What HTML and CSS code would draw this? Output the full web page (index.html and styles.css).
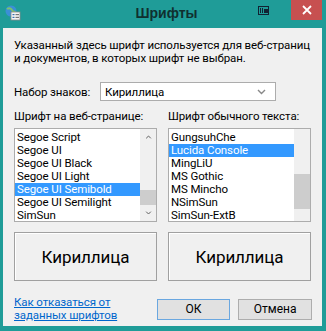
FILE: index.html
```html
<!DOCTYPE html>
<html lang="ru">
<head>
  <meta charset="UTF-8">
  <title>Шрифты</title>
  <link rel="stylesheet" href="styles.css">
</head>
<body>
  <div class="window">
    <!-- заголовок окна -->
    <div class="titlebar">
      <svg class="app-icon" width="16" height="16" viewBox="0 0 16 16">
        <circle cx="6" cy="6" r="5.5" fill="#3b8fd6"/>
        <path d="M2 4 Q5 2 7 5 T10 6" stroke="#7cc36a" stroke-width="2" fill="none"/>
        <rect x="6" y="7" width="9" height="8" fill="#f4f4f4" stroke="#8a8a8a" stroke-width="0.8"/>
        <rect x="7.5" y="9" width="2" height="1.2" fill="#3a6fb0"/>
        <rect x="10.5" y="9" width="3.5" height="1.2" fill="#777"/>
        <rect x="7.5" y="11.8" width="2" height="1.2" fill="#3a6fb0"/>
        <rect x="10.5" y="11.8" width="3.5" height="1.2" fill="#777"/>
      </svg>
      <div class="title">Шрифты</div>
      <svg class="pin-icon" width="11" height="9" viewBox="0 0 11 9">
        <rect x="0.5" y="0.5" width="10" height="8" fill="none" stroke="#123" stroke-width="1"/>
        <rect x="2" y="2" width="1" height="5" fill="#123"/>
        <rect x="4" y="2" width="1" height="5" fill="#123"/>
        <rect x="6" y="3" width="4" height="4" fill="#123"/>
      </svg>
      <div class="close">
        <svg width="10" height="10" viewBox="0 0 10 10">
          <path d="M1 1 L9 9 M9 1 L1 9" stroke="#fff" stroke-width="1.8"/>
        </svg>
      </div>
    </div>

    <div class="client">
      <p class="intro">Указанный здесь шрифт используется для веб-страниц и документов, в которых шрифт не выбран.</p>

      <div class="charset">
        <span>Набор знаков:</span>
        <div class="select">
          <span>Кириллица</span>
          <svg width="9" height="6" viewBox="0 0 9 6"><path d="M1 1 L4.5 4.5 L8 1" stroke="#888" stroke-width="1.4" fill="none"/></svg>
        </div>
      </div>

      <div class="columns">
        <div class="column">
          <label>Шрифт на веб-странице:</label>
          <div class="listbox">
            <ul class="items">
              <li>Segoe Script</li>
              <li>Segoe UI</li>
              <li>Segoe UI Black</li>
              <li>Segoe UI Light</li>
              <li class="selected">Segoe UI Semibold</li>
              <li>Segoe UI Semilight</li>
              <li>SimSun</li>
            </ul>
            <div class="scrollbar">
              <svg class="arrow" width="9" height="6" viewBox="0 0 9 6"><path d="M1 5 L4.5 1.5 L8 5" stroke="#606060" stroke-width="1.5" fill="none"/></svg>
              <div class="track"><div class="thumb" style="margin-top:45px;height:15px"></div></div>
              <svg class="arrow" width="9" height="6" viewBox="0 0 9 6"><path d="M1 1 L4.5 4.5 L8 1" stroke="#606060" stroke-width="1.5" fill="none"/></svg>
            </div>
          </div>
          <div class="preview">Кириллица</div>
        </div>

        <div class="column">
          <label>Шрифт обычного текста:</label>
          <div class="listbox">
            <ul class="items">
              <li>GungsuhChe</li>
              <li class="selected">Lucida Console</li>
              <li>MingLiU</li>
              <li>MS Gothic</li>
              <li>MS Mincho</li>
              <li>NSimSun</li>
              <li>SimSun-ExtB</li>
            </ul>
            <div class="scrollbar">
              <svg class="arrow" width="9" height="6" viewBox="0 0 9 6"><path d="M1 5 L4.5 1.5 L8 5" stroke="#606060" stroke-width="1.5" fill="none"/></svg>
              <div class="track"><div class="thumb" style="margin-top:33px;height:35px"></div></div>
              <svg class="arrow" width="9" height="6" viewBox="0 0 9 6"><path d="M1 1 L4.5 4.5 L8 1" stroke="#606060" stroke-width="1.5" fill="none"/></svg>
            </div>
          </div>
          <div class="preview">Кириллица</div>
        </div>
      </div>

      <div class="footer">
        <a href="#" class="link">Как отказаться от<br>заданных шрифтов</a>
        <button class="btn default">ОК</button>
        <button class="btn">Отмена</button>
      </div>
    </div>
  </div>
</body>
</html>
```

FILE: styles.css
```css
* {
  box-sizing: border-box;
  margin: 0;
  padding: 0;
}

body {
  width: 326px;
  height: 331px;
  overflow: hidden;
  background: #1f9c98;
  font-family: Roboto, "Liberation Sans", sans-serif;
  font-size: 11.5px;
  letter-spacing: -0.1px;
  color: #000;
}

.window {
  display: flex;
  flex-direction: column;
  height: 100%;
}

.titlebar {
  height: 28px;
  display: flex;
  align-items: flex-start;
  padding-left: 5px;
}

.app-icon {
  margin-top: 5px;
}

.title {
  flex: 1;
  text-align: center;
  font-family: "Liberation Sans", sans-serif;
  font-weight: bold;
  font-size: 14px;
  letter-spacing: 0;
  color: #10302f;
  margin-top: 5px;
  padding-left: 54px;
}

.pin-icon {
  margin-top: 6px;
  margin-right: 22px;
}

.close {
  width: 31px;
  height: 20px;
  background: #c75050;
  display: flex;
  align-items: center;
  justify-content: center;
  margin-right: 4px;
}

.client {
  flex: 1;
  margin: 0 4px 5px 3px;
  background: #f0f0f0;
  padding: 11px 10px 0 11px;
}

.intro {
  line-height: 13px;
}

.charset {
  display: flex;
  align-items: center;
  margin-top: 17px;
}

.charset > span {
  width: 86px;
}

.select {
  width: 176px;
  height: 19px;
  border: 1px solid #acacac;
  background: #fff;
  display: flex;
  align-items: center;
  justify-content: space-between;
  padding: 0 9px 0 4px;
}

.columns {
  display: flex;
  gap: 11px;
  margin-top: 8px;
}

.column {
  width: 143px;
}

.column label {
  display: block;
  line-height: 14px;
  margin-bottom: 5px;
}

.listbox {
  height: 94px;
  border: 1px solid #acacac;
  background: #fff;
  display: flex;
}

.items {
  flex: 1;
  list-style: none;
  padding-top: 2px;
  overflow: hidden;
}

.items li {
  height: 13px;
  line-height: 13px;
  padding-left: 2px;
  white-space: nowrap;
}

.items li.selected {
  background: #3399ff;
  color: #fff;
}

.scrollbar {
  width: 16px;
  background: #f0f0f0;
  display: flex;
  flex-direction: column;
  align-items: center;
}

.arrow {
  margin: 6px 0;
}

.track {
  flex: 1;
  width: 100%;
}

.thumb {
  width: 100%;
  background: #cdcdcd;
}

.preview {
  height: 49px;
  margin-top: 10px;
  border: 1px solid #a0a0a0;
  box-shadow: inset 1px 1px 0 #fff;
  display: flex;
  align-items: center;
  justify-content: center;
  font-size: 17px;
}

.footer {
  display: flex;
  align-items: center;
  margin-top: 15px;
}

.link {
  color: #0066cc;
  line-height: 13px;
  width: 143px;
}

.btn {
  width: 74px;
  height: 21px;
  font-family: inherit;
  font-size: 12px;
  background: #e1e1e1;
  border: 1px solid #adadad;
  margin-left: 8px;
}

.btn.default {
  border-color: #6aa7e0;
  margin-left: 0;
}
```
